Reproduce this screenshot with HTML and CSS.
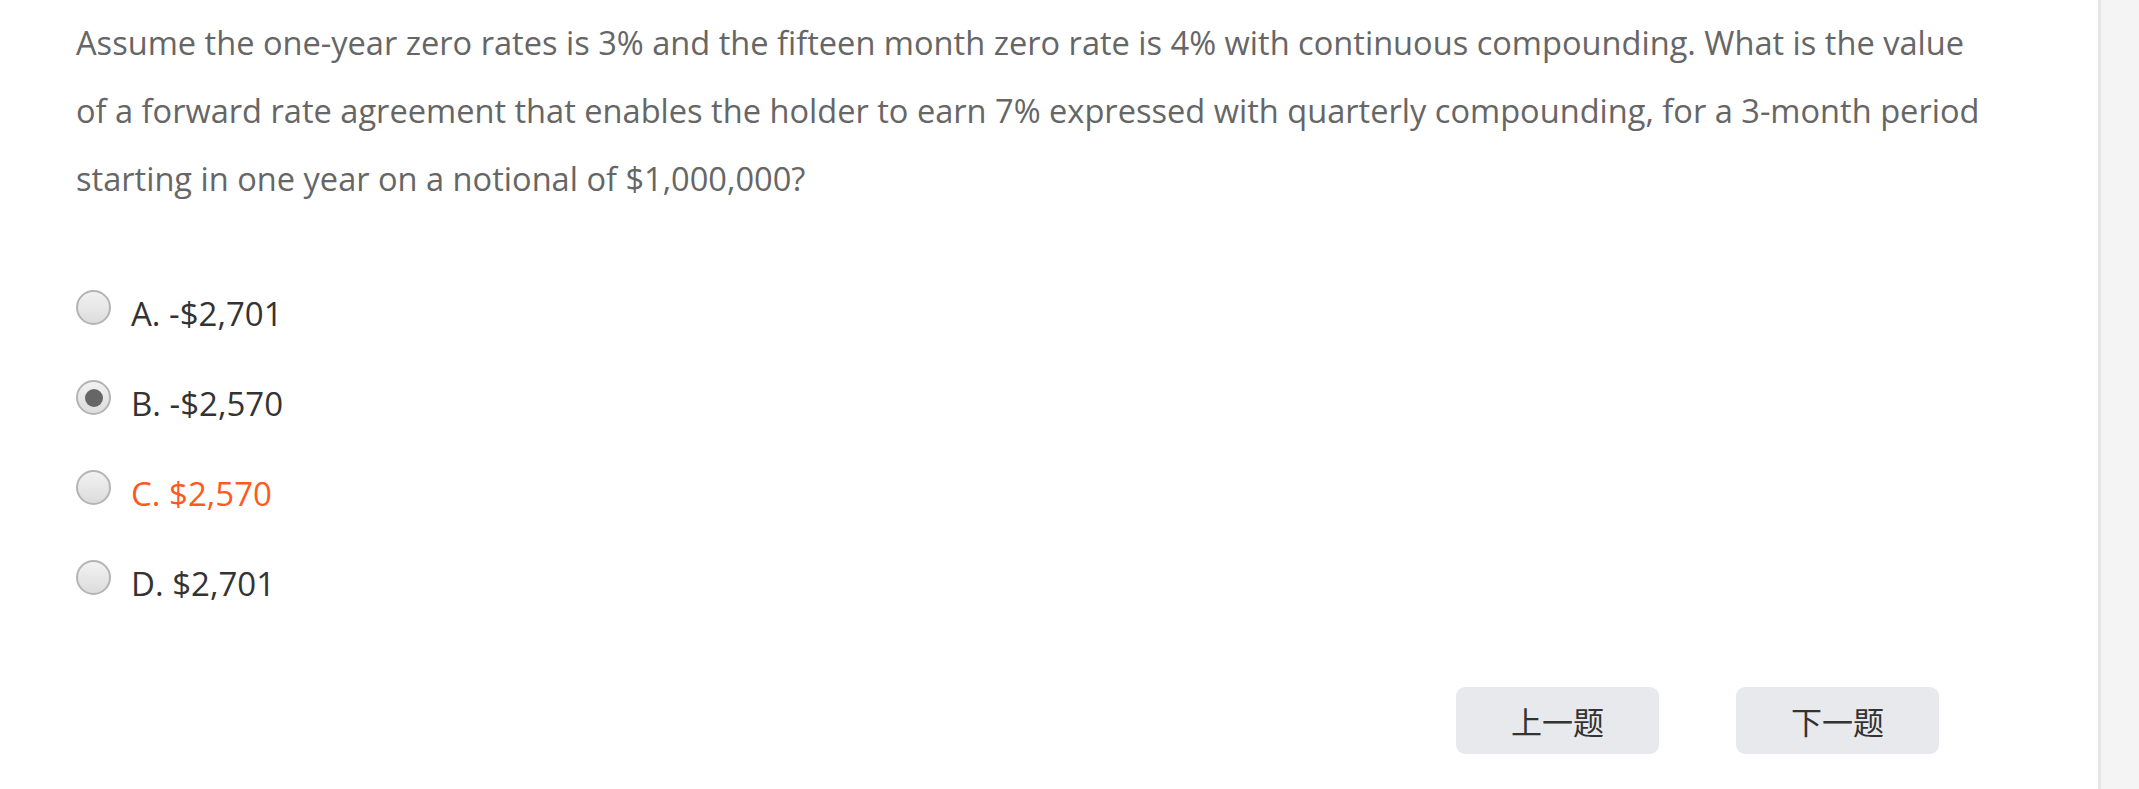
FILE: index.html
```html
<!DOCTYPE html>
<html lang="en">
<head>
<meta charset="utf-8">
<title>Question</title>
<link rel="stylesheet" href="styles.css">
</head>
<body>
<div class="page">
  <main class="main">
    <p class="question">Assume the one-year zero rates is 3% and the fifteen month zero rate is 4% with continuous compounding. What is the value<br>of a forward rate agreement that enables the holder to earn 7% expressed with quarterly compounding, for a 3-month period<br>starting in one year on a notional of $1,000,000?</p>
    <ul class="options">
      <li class="option"><span class="radio"></span><span class="label">A. -$2,701</span></li>
      <li class="option"><span class="radio checked"></span><span class="label">B. -$2,570</span></li>
      <li class="option correct"><span class="radio"></span><span class="label">C. $2,570</span></li>
      <li class="option"><span class="radio"></span><span class="label">D. $2,701</span></li>
    </ul>
    <div class="nav">
      <button class="btn">上一题</button>
      <button class="btn">下一题</button>
    </div>
  </main>
  <div class="scrollbar"></div>
</div>
</body>
</html>
```

FILE: styles.css
```css
html, body {
  margin: 0;
  padding: 0;
  background: #ffffff;
  height: 789px;
  overflow: hidden;
}

.page {
  display: flex;
  height: 789px;
}

.main {
  flex: 1;
  padding: 9px 0 0 76px;
  font-family: "Open Sans", "Noto Sans", "Noto Sans CJK SC", sans-serif;
}

.question {
  margin: 0;
  white-space: nowrap;
  font-size: 32.6px;
  line-height: 68px;
  color: #666666;
}

.options {
  list-style: none;
  margin: 49px 0 0 0;
  padding: 0;
}

.option {
  display: flex;
  align-items: flex-start;
  height: 90px;
  color: #333333;
}

.option.correct {
  color: #ff5a1e;
}

.radio {
  box-sizing: border-box;
  width: 35px;
  height: 35px;
  margin-top: 28px;
  border-radius: 50%;
  border: 2px solid #b4b4b4;
  background: linear-gradient(#f2f2f2, #dcdcdc);
  display: flex;
  align-items: center;
  justify-content: center;
}

.radio.checked::after {
  content: "";
  width: 18px;
  height: 18px;
  border-radius: 50%;
  background: #666666;
}

.label {
  margin-left: 20px;
  margin-top: 30px;
  font-size: 33px;
  line-height: 44px;
}

.nav {
  display: flex;
  justify-content: flex-end;
  gap: 77px;
  margin-top: 65px;
  padding-right: 159px;
}

.btn {
  width: 203px;
  height: 67px;
  border: none;
  border-radius: 9px;
  background: #e8e9ec;
  color: #333333;
  font-family: "Noto Sans CJK SC", sans-serif;
  font-size: 31px;
  padding: 0;
}

.scrollbar {
  width: 38px;
  border-left: 3px solid #e6e6e6;
  background: #f4f4f4;
}
```
